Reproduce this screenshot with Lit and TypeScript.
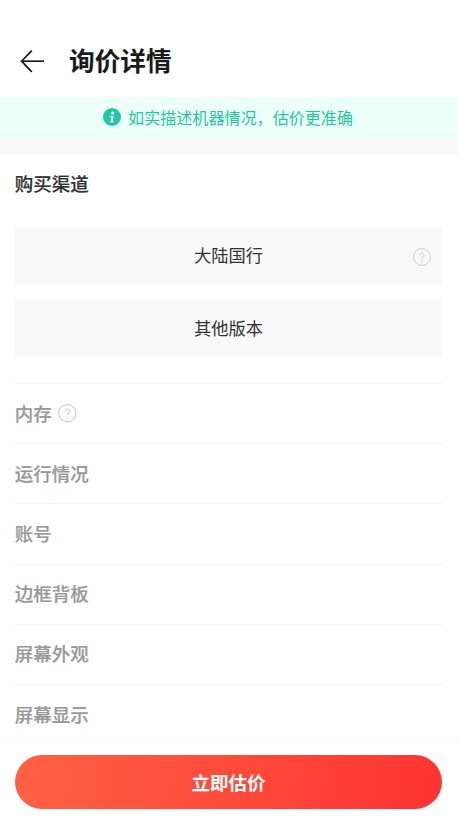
import { LitElement, html, css } from "lit";
import { customElement } from "lit/decorators.js";

const help = (cls: string) => html`<svg class=${cls} viewBox="0 0 18 18" fill="none">
  <circle cx="9" cy="9" r="8.4" stroke="#cdcdcd" stroke-width="1"/>
  <path d="M6.9 7.1a2.1 2.1 0 1 1 3.3 1.7c-.8.5-1.2 1-1.2 1.9" stroke="#cdcdcd" stroke-width="1" stroke-linecap="round"/>
  <circle cx="9" cy="13" r=".7" fill="#cdcdcd"/>
</svg>`;

@customElement("app-root")
export class AppRoot extends LitElement {
  static styles = css`
    :host {
      display: block;
      width: 458px;
      height: 820px;
      background: #fff;
      font-family: "Noto Sans CJK SC", "Liberation Sans", sans-serif;
      overflow: hidden;
    }
    .page { display: flex; flex-direction: column; height: 820px; }
    .header {
      height: 97px;
      box-sizing: border-box;
      padding: 24px 0 0 20px;
      display: flex;
      align-items: center;
      gap: 25px;
    }
    .back { width: 24px; height: 24px; display: block; }
    .title { font-size: 25.7px; line-height: 36px; font-weight: 700; color: #1a1a1a; margin-bottom: 2px; }
    .notice {
      height: 41px;
      box-sizing: border-box;
      padding: 0 2px 2px 0;
      background: #ecfff9;
      display: flex;
      align-items: center;
      justify-content: center;
      gap: 7px;
      color: #1fc8a0;
      font-size: 16.07px;
    }
    .info { width: 18px; height: 18px; display: block; }
    .strip { height: 17px; background: #f8f8f8; }
    .content { flex: 1; padding: 0 15.7px 0 14.7px; overflow: hidden; }
    .section-title {
      height: 59px;
      line-height: 57px;
      font-size: 18.5px;
      font-weight: 500;
      -webkit-text-stroke: 0.2px currentColor;
      color: #333;
    }
    .options { padding-top: 12px; display: flex; flex-direction: column; gap: 13px; }
    .option {
      position: relative;
      height: 59.5px;
      box-sizing: border-box;
      padding-bottom: 2px;
      background: #f8f8f8;
      display: flex;
      align-items: center;
      justify-content: center;
      font-size: 17.25px;
      color: #333;
    }
    .opt-help { position: absolute; right: 11.5px; top: 22px; width: 18px; height: 18px; }
    .list { margin-top: 25px; }
    .row {
      height: 60.2px;
      box-sizing: border-box;
      padding-bottom: 2px;
      border-top: 1px solid #f2f2f2;
      display: flex;
      align-items: center;
      gap: 6.6px;
      font-size: 18.5px;
      font-weight: 500;
      -webkit-text-stroke: 0.2px currentColor;
      color: #999;
    }
    .row-help { width: 18.5px; height: 18.5px; margin-top: 2px; }
    .footer {
      height: 78px;
      box-sizing: border-box;
      border-top: 1px solid #f7f7f7;
      padding: 12px 15.7px 0 14.7px;
    }
    .cta {
      height: 54px;
      border-radius: 27px;
      background: linear-gradient(100deg, #ff6242, #ff3333);
      color: #fff;
      font-size: 18.5px;
      font-weight: 700;
      display: flex;
      align-items: center;
      justify-content: center;
    }
  `;

  render() {
    const rows = ["运行情况", "账号", "边框背板", "屏幕外观", "屏幕显示"];
    return html`<div class="page">
      <div class="header">
        <svg class="back" viewBox="0 0 24 24" fill="none" stroke="#1a1a1a" stroke-width="1.7">
          <path d="M24 12.2H2"/><path d="M11.8 1.6 1.6 12.2l10.2 10.6"/>
        </svg>
        <div class="title">询价详情</div>
      </div>
      <div class="notice">
        <svg class="info" viewBox="0 0 18 18">
          <circle cx="9" cy="9" r="9" fill="#1fc8a0"/>
          <circle cx="9.6" cy="4.9" r="1.5" fill="#fff"/>
          <path d="M6.8 8h3.9l-1 5h1.2v1.3H6.9v-1.3h1l.8-3.7H6.8z" fill="#fff"/>
        </svg>
        <span>如实描述机器情况，估价更准确</span>
      </div>
      <div class="strip"></div>
      <div class="content">
        <div class="section-title">购买渠道</div>
        <div class="options">
          <div class="option">大陆国行${help("opt-help")}</div>
          <div class="option">其他版本</div>
        </div>
        <div class="list">
          <div class="row">内存${help("row-help")}</div>
          ${rows.map((r) => html`<div class="row">${r}</div>`)}
        </div>
      </div>
      <div class="footer"><div class="cta">立即估价</div></div>
    </div>`;
  }
}
